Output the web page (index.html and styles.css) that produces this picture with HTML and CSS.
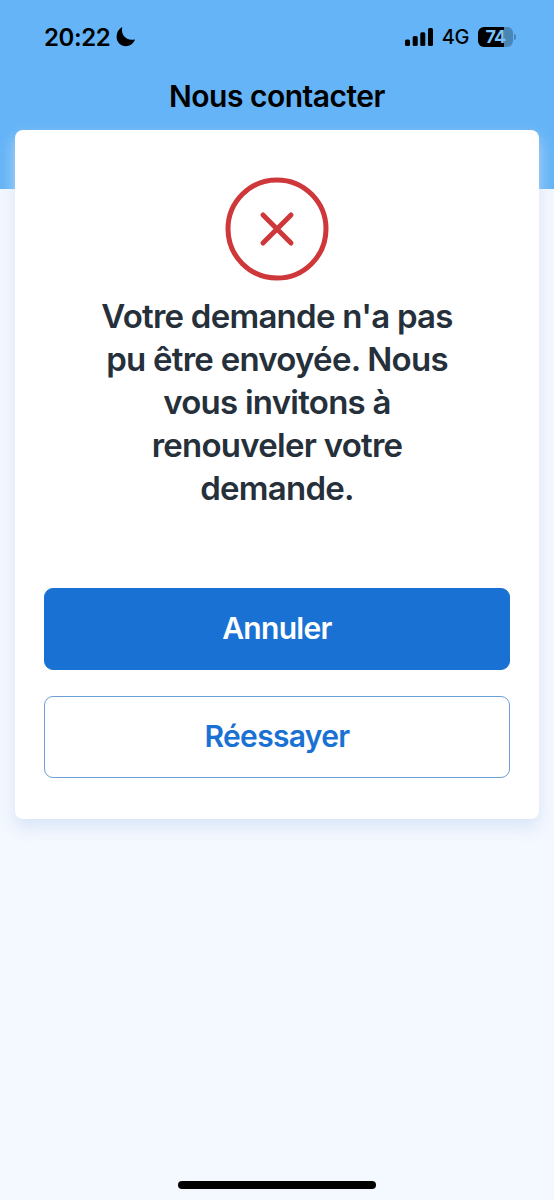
FILE: index.html
```html
<!DOCTYPE html>
<html lang="fr">
<head>
    <meta charset="utf-8">
    <meta name="viewport" content="width=device-width, initial-scale=1">
    <title>Nous contacter</title>
    <link rel="stylesheet" href="styles.css">
</head>
<body>
    <header>
        <div class="status-bar">
            <div class="status-left">
                <span class="time">20:22</span>
                <svg class="moon" width="20" height="20" viewBox="0 0 20 20">
                    <path d="M6.2 0.6C4.8 7.8 9.8 14 18.2 12.6C18.9 12.5 18.9 13 18.6 13.5C16.8 17.2 13.6 19.2 9.8 19.2C4.4 19.2 0.6 15.2 0.6 9.8C0.6 5.8 2.4 2.6 5.4 0.6C5.9 0.2 6.3 0.2 6.2 0.6Z" fill="#000"/>
                </svg>
            </div>
            <div class="status-right">
                <svg width="28" height="18" viewBox="0 0 28 18">
                    <rect x="0" y="11.5" width="5" height="6.5" rx="1.5"/>
                    <rect x="7.7" y="8" width="5" height="10" rx="1.5"/>
                    <rect x="15.3" y="4.3" width="5" height="13.7" rx="1.5"/>
                    <rect x="23" y="0" width="5" height="18" rx="1.5"/>
                </svg>
                <span class="network">4G</span>
                <div class="battery"><span>74</span></div>
                <div class="battery-tip"></div>
            </div>
        </div>
        <h1>Nous contacter</h1>
    </header>

    <main class="card">
        <svg class="error-icon" width="104" height="104" viewBox="0 0 104 104" fill="none" stroke="#cf383b" stroke-width="5">
            <circle cx="52" cy="52" r="49"/>
            <path d="M38 38L66 66M66 38L38 66" stroke-linecap="round"/>
        </svg>
        <p class="message">Votre demande n'a pas pu être envoyée. Nous vous invitons à renouveler votre demande.</p>
        <button class="btn btn-primary">Annuler</button>
        <button class="btn btn-outline">Réessayer</button>
    </main>

    <div class="home-indicator"></div>
</body>
</html>
```
FILE: styles.css
```css
* {
    box-sizing: border-box;
}

body {
    font-family: Inter, "Liberation Sans", sans-serif;
    background-color: #f4f8ff;
    margin: 0;
    height: 1200px;
    display: flex;
    flex-direction: column;
    overflow: hidden;
}

header {
    background-color: #64b4f7;
    height: 189px;
    flex-shrink: 0;
}

.status-bar {
    display: flex;
    justify-content: space-between;
    height: 74px;
    padding: 0 38px 0 44px;
}

.status-left, .status-right {
    display: flex;
    align-items: center;
}

.time {
    font-size: 24px;
    font-weight: 600;
    letter-spacing: -0.4px;
}

.moon {
    margin-left: 6px;
}

.network {
    font-size: 20px;
    font-weight: 500;
    margin-left: 9px;
    letter-spacing: -0.4px;
}

.battery {
    width: 35px;
    height: 20px;
    margin-left: 9px;
    border-radius: 6px;
    background: linear-gradient(to right, #000 74%, #4986b8 74%);
    color: #7cc3fb;
    font-size: 18px;
    font-weight: 700;
    line-height: 20px;
    text-align: center;
    letter-spacing: -0.8px;
}

.battery-tip {
    width: 2px;
    height: 6px;
    margin-left: 1px;
    border-radius: 0 2px 2px 0;
    background-color: #4986b8;
}

h1 {
    margin: 4px 0 0;
    font-size: 30px;
    font-weight: 600;
    line-height: 36px;
    text-align: center;
    letter-spacing: -0.5px;
}

/* la carte remonte sur l'en-tête */
.card {
    display: flex;
    flex-direction: column;
    align-items: center;
    height: 689px;
    margin: -59px 15px 0;
    padding: 47px 29px 0;
    border-radius: 8px;
    background-color: #fff;
    box-shadow: 0 8px 16px rgba(209, 224, 244, 0.8);
}

.error-icon {
    flex-shrink: 0;
}

.message {
    width: 370px;
    margin: 14px 0 78px;
    color: #25303b;
    font-size: 33px;
    font-weight: 600;
    line-height: 43px;
    text-align: center;
    letter-spacing: -0.75px;
}

.btn {
    width: 466px;
    height: 82px;
    padding: 0 0 2px;
    border: 1px solid #1a71d4;
    border-radius: 9px;
    font-family: inherit;
    font-size: 30px;
    font-weight: 600;
    letter-spacing: -0.7px;
    cursor: pointer;
}

.btn-primary {
    background-color: #1a71d4;
    color: #fff;
}

.btn-outline {
    margin-top: 26px;
    border-color: #6c9fd8;
    background-color: #fff;
    color: #1a71d4;
}

.home-indicator {
    width: 198px;
    height: 8px;
    margin: auto auto 11px;
    border-radius: 4px;
    background-color: #000;
}
```
